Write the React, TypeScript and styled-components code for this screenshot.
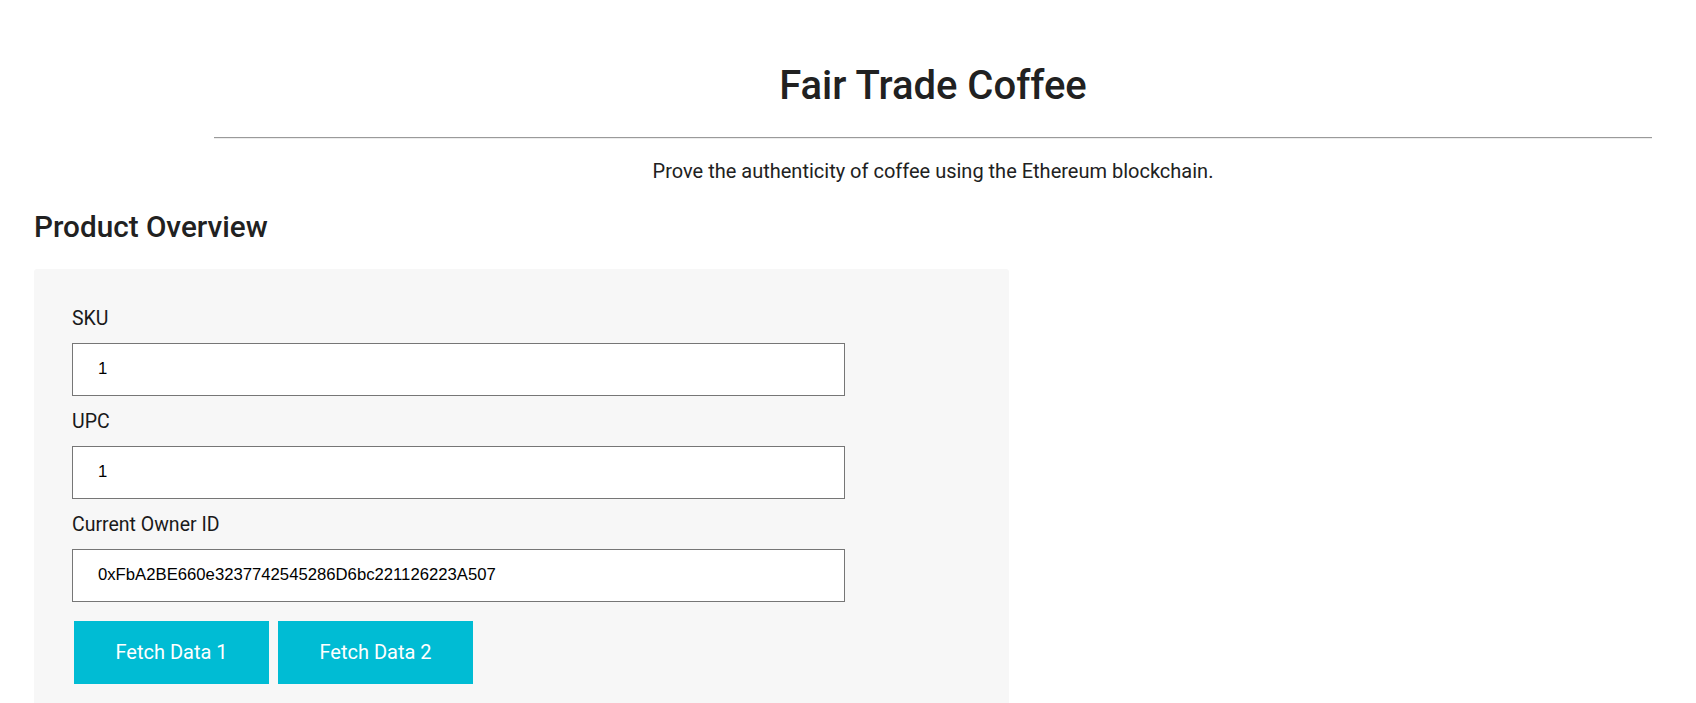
import React from "react";
import styled, { createGlobalStyle } from "styled-components";

const GlobalStyle = createGlobalStyle`
  html, body {
    margin: 0;
    padding: 0;
    background: #ffffff;
    font-family: Roboto, "Liberation Sans", Arial, sans-serif;
    color: #212121;
  }
`;

const Page = styled.div`
  display: flex;
  flex-direction: column;
  padding: 62px 44px 0 34px;
`;

const Header = styled.header`
  display: flex;
  flex-direction: column;
  align-items: stretch;
  margin-left: 180px;
  text-align: center;
`;

const Title = styled.h1`
  margin: 0;
  font-size: 40px;
  font-weight: 500;
  line-height: normal;
  color: #212121;
`;

const Rule = styled.hr`
  margin: 28px 0 0;
  border: 0;
  border-top: 1px solid #9a9a9a;
  border-bottom: 1px solid #ededed;
  height: 0;
`;

const Subtitle = styled.p`
  margin: 20px 0 0;
  font-size: 20px;
  line-height: normal;
  color: #212121;
`;

const SectionTitle = styled.h2`
  margin: 26px 0 0;
  font-size: 29.7px;
  font-weight: 500;
  line-height: normal;
  color: #212121;
`;

const Panel = styled.section`
  margin-top: 25px;
  width: 975px;
  box-sizing: border-box;
  background: #f7f7f7;
  border-radius: 3px;
  padding: 37.5px 0 24px 38px;
  display: flex;
  flex-direction: column;
`;

const Field = styled.div`
  display: flex;
  flex-direction: column;
  & + & {
    margin-top: 14px;
  }
`;

const Label = styled.label`
  font-size: 19.5px;
  line-height: normal;
  color: #1a1a1a;
  margin-bottom: 13px;
`;

const Input = styled.input`
  box-sizing: border-box;
  width: 773px;
  height: 53px;
  border: 1px solid #767676;
  border-radius: 0;
  background: #ffffff;
  padding: 0 0 0 25px;
  font-family: "Liberation Sans", Arial, sans-serif;
  font-size: 16.7px;
  color: #000000;
  outline: none;
`;

const Actions = styled.div`
  display: flex;
  gap: 9px;
  margin-top: 19px;
  padding-left: 2px;
`;

const ActionButton = styled.button`
  width: 195px;
  height: 63px;
  border: 0;
  border-radius: 0;
  background: #00bcd4;
  color: #ffffff;
  font-family: Roboto, "Liberation Sans", Arial, sans-serif;
  font-size: 20px;
  cursor: pointer;
`;

export default function App() {
  return (
    <>
      <GlobalStyle />
      <Page>
        <Header>
          <Title>Fair Trade Coffee</Title>
          <Rule />
          <Subtitle>Prove the authenticity of coffee using the Ethereum blockchain.</Subtitle>
        </Header>
        <SectionTitle>Product Overview</SectionTitle>
        <Panel>
          <Field>
            <Label htmlFor="sku">SKU</Label>
            <Input id="sku" defaultValue="1" />
          </Field>
          <Field>
            <Label htmlFor="upc">UPC</Label>
            <Input id="upc" defaultValue="1" />
          </Field>
          <Field>
            <Label htmlFor="owner">Current Owner ID</Label>
            <Input id="owner" defaultValue="0xFbA2BE660e3237742545286D6bc221126223A507" />
          </Field>
          <Actions>
            <ActionButton>Fetch Data 1</ActionButton>
            <ActionButton>Fetch Data 2</ActionButton>
          </Actions>
        </Panel>
      </Page>
    </>
  );
}
